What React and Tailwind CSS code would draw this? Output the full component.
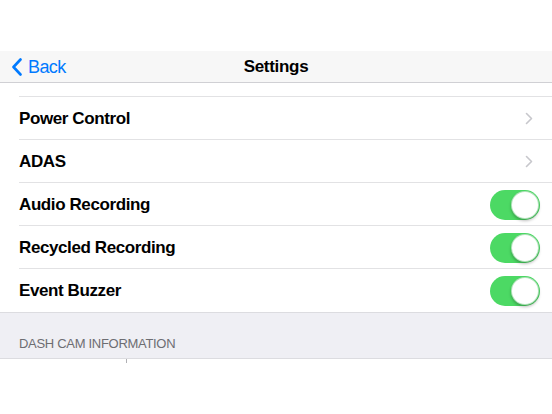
import React from 'react';

const rows = [
  { label: 'Power Control', type: 'link' },
  { label: 'ADAS', type: 'link' },
  { label: 'Audio Recording', type: 'toggle' },
  { label: 'Recycled Recording', type: 'toggle' },
  { label: 'Event Buzzer', type: 'toggle' },
];

function Toggle() {
  return (
    <div className="w-[50px] h-[30px] rounded-full bg-[#4cd964] relative">
      <div className="absolute right-[1px] top-[1px] w-[28px] h-[28px] rounded-full bg-white shadow-[0_2px_3px_rgba(0,0,0,0.25)] border border-[#3fb954]/40" />
    </div>
  );
}

function Chevron() {
  return (
    <svg width="8" height="13" viewBox="0 0 8 13" className="mr-[19px]">
      <path d="M1.5 1.5 L6.5 6.5 L1.5 11.5" fill="none" stroke="#c7c7cc" strokeWidth="1.6" strokeLinecap="round" strokeLinejoin="round" />
    </svg>
  );
}

export default function App() {
  return (
    <div className="w-full h-[414px] bg-white flex flex-col font-['Liberation_Sans',Arial,sans-serif] overflow-hidden">
      <div className="h-[51px] bg-white" />
      <header className="h-[32px] bg-[#f7f7f7] border-b border-[#d0d0d4] flex items-center relative">
        <div className="flex items-center text-[#007aff] pl-[11px]">
          <svg width="12" height="18" viewBox="0 0 12 18">
            <path d="M9.5 1.5 L2.5 9 L9.5 16.5" fill="none" stroke="#007aff" strokeWidth="2.6" strokeLinecap="round" strokeLinejoin="round" />
          </svg>
          <span className="ml-[5px] text-[18px] leading-none tracking-[-0.6px]">Back</span>
        </div>
        <div className="absolute inset-0 flex items-center justify-center text-[17px] font-bold text-black tracking-[-0.3px]">
          Settings
        </div>
      </header>
      <div className="h-[13px]" />
      <div className="ml-[19px] border-t border-[#e2e2e4]" />
      {rows.map((r, i) => (
        <div key={r.label} className="h-[43px] flex items-center relative">
          <span className="ml-[19px] flex-1 text-[17px] font-bold text-black tracking-[-0.4px]">{r.label}</span>
          {r.type === 'link' ? (
            <Chevron />
          ) : (
            <div className="mr-[12px]">
              <Toggle />
            </div>
          )}
          {i < rows.length - 1 && (
            <div className="absolute bottom-0 left-[19px] right-0 border-b border-[#e2e2e4]" />
          )}
        </div>
      ))}
      <div className="h-[47px] bg-[#efeff4] border-t border-b border-[#dcdce0] flex items-end pb-[5px]">
        <span className="ml-[19px] text-[13px] text-[#6d6d72] tracking-[-0.3px]">DASH CAM INFORMATION</span>
      </div>
      <div className="flex-1 bg-white">
        <div className="ml-[126px] w-px h-[4px] bg-[#b0b0b4]" />
      </div>
    </div>
  );
}
